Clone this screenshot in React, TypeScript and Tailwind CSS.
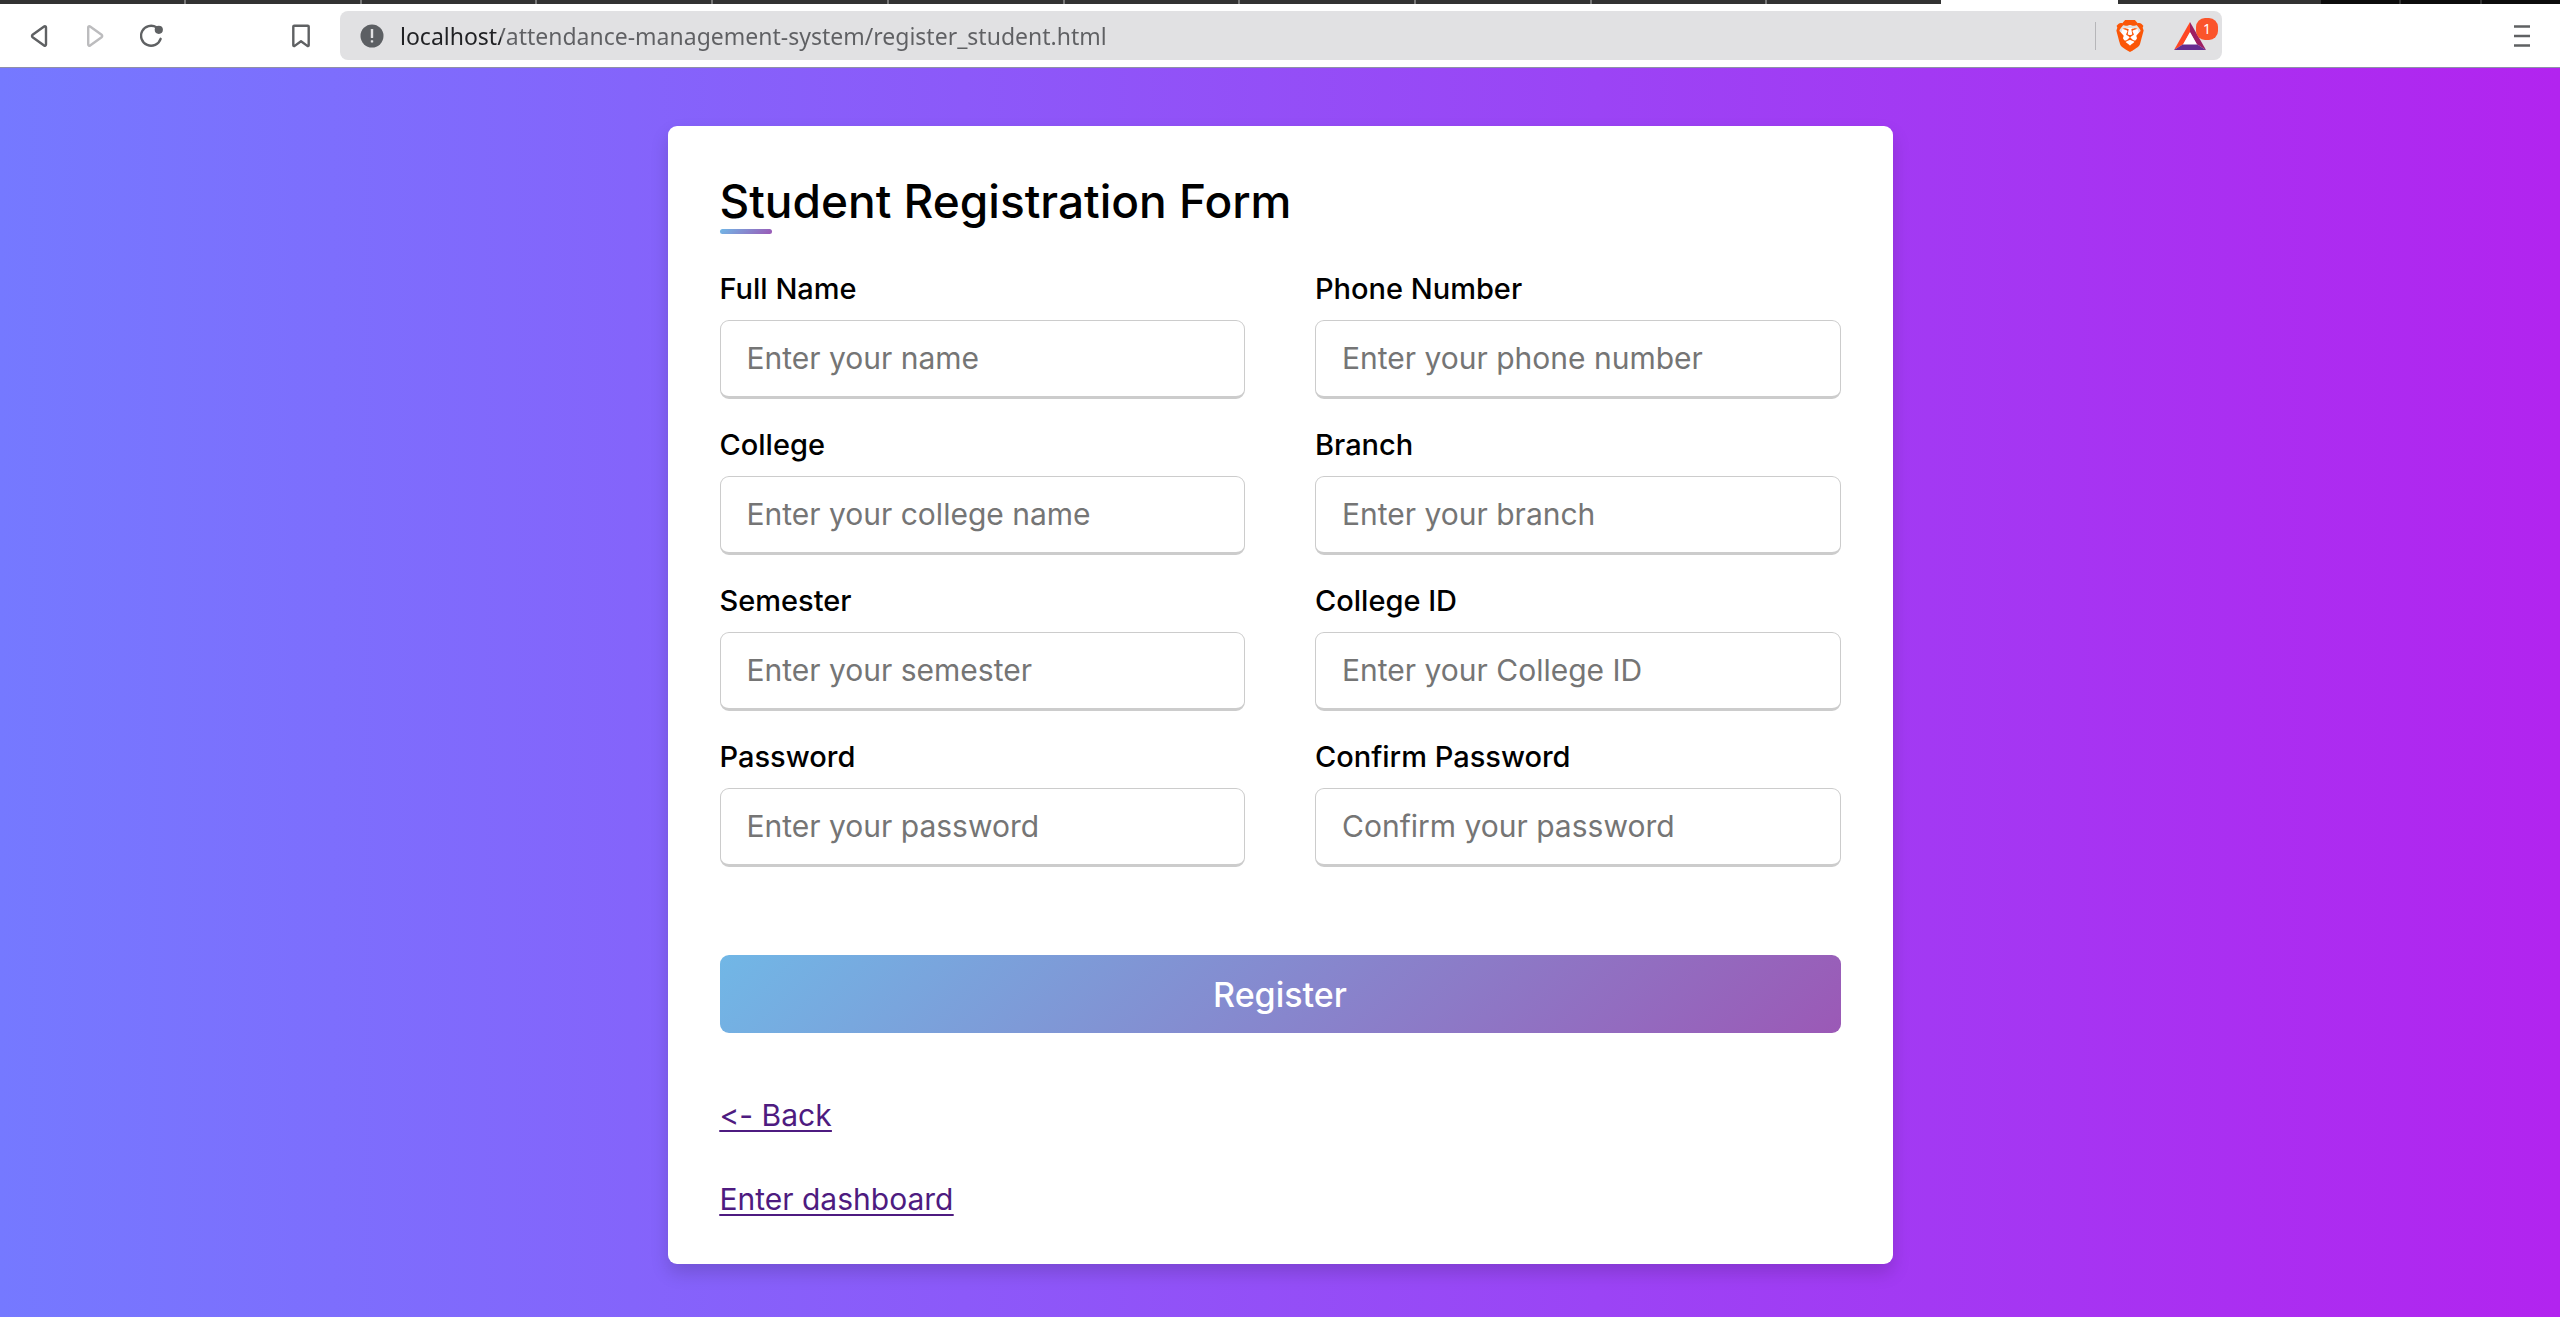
import { SiBrave } from "react-icons/si";

const fields = [
  { id: "full-name", label: "Full Name", placeholder: "Enter your name", type: "text" },
  { id: "phone", label: "Phone Number", placeholder: "Enter your phone number", type: "tel" },
  { id: "college", label: "College", placeholder: "Enter your college name", type: "text" },
  { id: "branch", label: "Branch", placeholder: "Enter your branch", type: "text" },
  { id: "semester", label: "Semester", placeholder: "Enter your semester", type: "text" },
  { id: "college-id", label: "College ID", placeholder: "Enter your College ID", type: "text" },
  { id: "password", label: "Password", placeholder: "Enter your password", type: "password" },
  { id: "confirm", label: "Confirm Password", placeholder: "Confirm your password", type: "password" },
];

function TabStrip() {
  return (
    <div className="flex h-1 bg-[#323232]" aria-hidden="true">
      <div className="w-[186px] border-r-2 border-[#777777]" />
      <div className="flex flex-1">
        {Array.from({ length: 10 }, (_, i) => (
          <div key={i} className={i < 9 ? "flex-1 border-r-2 border-[#777777]" : "flex-1"} />
        ))}
      </div>
      <div className="w-[177px] bg-white" />
      <div className="w-[203px]" />
      <div className="flex w-[239px] bg-[#0c0c0c]">
        <div className="flex-1 border-r-2 border-[#323232]" />
        <div className="flex-1 border-r-2 border-[#323232]" />
        <div className="flex-1" />
      </div>
    </div>
  );
}

function Toolbar() {
  return (
    <header className="flex h-16 items-center border-b border-[#8f8fa8] bg-white pl-7 pr-7">
      <button type="button" aria-label="Back" className="mr-8 text-[#5f6163]">
        <svg width="24" height="24" viewBox="0 0 24 24" fill="none" stroke="currentColor" strokeWidth="2.4" strokeLinejoin="round">
          <path d="M18 3.4v17.2c0 1-1.1 1.5-1.9.9L4.6 13.2c-.8-.6-.8-1.8 0-2.4L16.1 2.5c.8-.6 1.9-.1 1.9.9z" />
        </svg>
      </button>
      <button type="button" aria-label="Forward" className="mr-8 text-[#bcbcbe]">
        <svg width="24" height="24" viewBox="0 0 24 24" fill="none" stroke="currentColor" strokeWidth="2.4" strokeLinejoin="round">
          <path d="M4.2 3.4v17.2c0 1 1.1 1.5 1.9.9l11.5-8.3c.8-.6.8-1.8 0-2.4L6.1 2.5c-.8-.6-1.9-.1-1.9.9z" />
        </svg>
      </button>
      <button type="button" aria-label="Reload" className="text-[#5f6163]">
        <svg width="24" height="24" viewBox="0 0 24 24" fill="none" stroke="currentColor" strokeWidth="2.4" strokeLinecap="round">
          <path d="M16.5 3.3A10 10 0 1 0 20.6 14.8" />
          <circle cx="18.8" cy="5.8" r="4.1" fill="currentColor" stroke="none" />
        </svg>
      </button>
      <button type="button" aria-label="Bookmark" className="ml-[125px] mr-[27px] text-[#5f6163]">
        <svg width="24" height="24" viewBox="0 0 24 24" fill="none" stroke="currentColor" strokeWidth="2.4" strokeLinejoin="round">
          <path d="M5.2 1.7h13.6c.5 0 .9.4.9.9v18.6c0 .8-.8 1.2-1.4.7L12 17.3l-6.3 4.600c-.6.5-1.4.1-1.4-.7V2.6c0-.5.4-.9.9-.9z" />
        </svg>
      </button>
      <div className="flex h-[49px] w-[1882px] min-w-0 shrink items-center rounded-lg bg-[#e1e1e3] pl-5 pr-1">
        <button type="button" aria-label="Site information" className="mr-4">
          <svg width="24" height="24" viewBox="0 0 24 24">
            <circle cx="12" cy="12" r="11.5" fill="#5c5f63" />
            <rect x="10.8" y="5" width="2.4" height="9" rx=".6" fill="#e1e1e3" />
            <rect x="10.8" y="16.2" width="2.4" height="2.4" rx=".6" fill="#e1e1e3" />
          </svg>
        </button>
        <input
          type="text"
          aria-label="Address"
          defaultValue="localhost/attendance-management-system/register_student.html"
          className="min-w-0 flex-1 bg-[linear-gradient(to_right,#202124_101px,#5f6063_101px)] bg-clip-text font-['Noto_Sans',sans-serif] text-[23px] leading-8 text-transparent outline-none"
        />
        <div className="h-7 w-px bg-[#b6b6b9]" />
        <button type="button" aria-label="Brave Shields" className="relative ml-[18px]">
          <svg width="32" height="32" viewBox="0 0 32 32" className="absolute inset-0" aria-hidden="true">
            <path d="M9 8h14l2 5-4 11-5 3-5-3-4-11z" fill="#fff" />
          </svg>
          <SiBrave className="relative size-8 text-[#fb5607]" />
        </button>
        <button type="button" aria-label="Brave Rewards" className="relative ml-7 mr-3">
          <svg width="32" height="28" viewBox="0 0 32 28">
            <path d="M16 0v10.500L9.500 22 0 28z" fill="#ff4724" />
            <path d="M16 0v10.500L22.500 22 32 28z" fill="#9e1f63" />
            <path d="M0 28l9.500-6h13l9.500 6z" fill="#662d91" />
            <path d="M16 10L23 22.500H9z" fill="#fff" />
          </svg>
          <span className="absolute -right-3 -top-1 flex h-[22px] w-[22px] items-center justify-center rounded-[9px] bg-[#fb542b] font-['Noto_Sans',sans-serif] text-sm text-white">
            1
          </span>
        </button>
      </div>
      <button type="button" aria-label="Menu" className="ml-auto text-[#5f6163]">
        <svg width="20" height="24" viewBox="0 0 20 24" fill="none" stroke="currentColor" strokeWidth="2.6">
          <path d="M2 2.500h16M2 12h16M2 21.500h16" />
        </svg>
      </button>
    </header>
  );
}

export default function App() {
  return (
    <div className="flex min-h-screen flex-col font-['Inter',sans-serif]">
      <TabStrip />
      <Toolbar />
      <main className="flex flex-1 items-start justify-center bg-[linear-gradient(to_right,#7579ff,#b224ef)] px-4 pb-[53px] pt-[58px]">
        <div className="w-full max-w-[1225px] rounded-[9px] bg-white px-[52px] py-11 shadow-[0_9px_18px_rgba(0,0,0,0.15)]">
          <h1 className="relative h-16 text-[46px] font-medium leading-[62px] text-black">
            Student Registration Form
            <span className="absolute bottom-0 left-0 h-[5px] w-[52px] rounded-[3px] bg-[linear-gradient(135deg,#71b7e6,#9b59b6)]" />
          </h1>
          <form className="mt-[35px]" onSubmit={(e) => e.preventDefault()}>
            <div className="grid grid-cols-1 gap-x-[70px] gap-y-[26px] md:grid-cols-2">
              {fields.map((f) => (
                <div key={f.id}>
                  <label htmlFor={f.id} className="mb-[11px] block text-[29px] font-medium leading-10 text-black">
                    {f.label}
                  </label>
                  <input
                    id={f.id}
                    type={f.type}
                    placeholder={f.placeholder}
                    className="block h-[79px] w-full rounded-[9px] border border-b-[3px] border-[#cccccc] pb-0.5 pl-[26px] pr-4 text-[30px] outline-none placeholder:text-[#757575]"
                  />
                </div>
              ))}
            </div>
            <button
              type="submit"
              className="mt-[88px] h-[78px] w-full rounded-[9px] bg-[linear-gradient(135deg,#71b7e6,#9b59b6)] text-[34px] font-medium text-white"
            >
              Register
            </button>
          </form>
          <nav className="mt-[61px] flex flex-col items-start gap-[42px] text-[30px] leading-[42px] text-[#4e1b80] underline decoration-2 underline-offset-4 [font-feature-settings:'calt'_0]">
            <a href="#back">&lt;- Back</a>
            <a href="#dashboard">Enter dashboard</a>
          </nav>
        </div>
      </main>
    </div>
  );
}
